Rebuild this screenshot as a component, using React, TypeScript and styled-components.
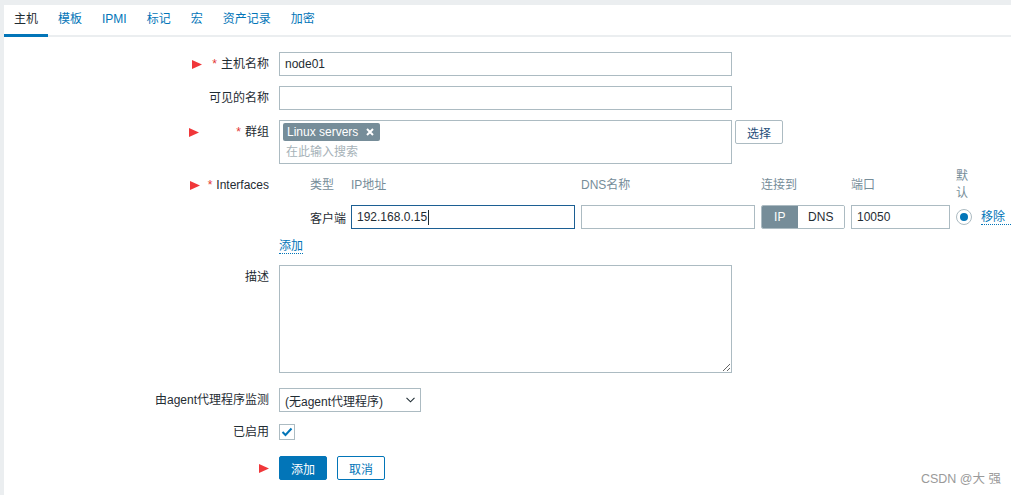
import React from "react";
import styled, { createGlobalStyle } from "styled-components";

const Global = createGlobalStyle`
  html, body { margin: 0; padding: 0; background: #ebeef0; }
  body {
    font-family: "Liberation Sans", Arial, "Noto Sans CJK SC", sans-serif;
    font-size: 12px;
    color: #1f2c33;
  }
  * { box-sizing: border-box; }
`;

const Page = styled.div`
  position: relative;
  margin: 5px 0 0 4px;
  background: #ffffff;
  height: 490px;
  overflow: hidden;
`;

const TabBar = styled.div`
  display: flex;
  box-shadow: inset 0 -2px 0 #ebeef0;
`;

const Tab = styled.div<{ $active?: boolean }>`
  padding: 0 10px;
  line-height: 29px;
  border-bottom: 3px solid ${(p) => (p.$active ? "#0275b8" : "transparent")};
  color: ${(p) => (p.$active ? "#1f2c33" : "#0275b8")};
  white-space: nowrap;
`;

const FormList = styled.div`
  display: flex;
  flex-direction: column;
`;

const Row = styled.div<{ $gap: number }>`
  display: grid;
  grid-template-columns: 265px 1fr;
  column-gap: 10px;
  margin-top: ${(p) => p.$gap}px;
`;

const LabelCell = styled.div<{ $pad?: number }>`
  display: flex;
  align-items: center;
  justify-content: flex-end;
  height: 24px;
  margin-top: ${(p) => p.$pad ?? 0}px;
  line-height: 24px;
  white-space: nowrap;
`;

const Marker = styled.svg<{ $left: number }>`
  margin-left: ${(p) => p.$left}px;
  margin-right: auto;
  flex: none;
`;

const Req = styled.span`
  color: #e33734;
  margin-right: 4px;
`;

const FieldCell = styled.div`
  display: flex;
  align-items: flex-start;
`;

const InputBox = styled.div`
  position: relative;
  display: flex;
`;

const TextInput = styled.input<{ $w: number; $focus?: boolean }>`
  width: ${(p) => p.$w}px;
  height: 24px;
  border: 1px solid ${(p) => (p.$focus ? "#1c5f93" : "#acbbc2")};
  padding: 0 5px;
  font: inherit;
  color: #1f2c33;
  background: #fff;
  outline: none;
  margin: 0;
`;

const Caret = styled.span<{ $left: number }>`
  position: absolute;
  left: ${(p) => p.$left}px;
  top: 5px;
  width: 1px;
  height: 15px;
  background: #1f2c33;
`;

const MultiSelect = styled.div`
  width: 453px;
  height: 44px;
  border: 1px solid #acbbc2;
  padding: 2px 3px;
  display: flex;
  flex-direction: column;
`;

const TagList = styled.div`
  display: flex;
`;

const Tag = styled.span`
  display: inline-flex;
  align-items: center;
  height: 18px;
  padding: 0 6px 0 4px;
  background: #768d99;
  color: #fff;
  border-radius: 2px;
  line-height: 18px;
  gap: 8px;
`;

const TagX = styled.svg`
  flex: none;
`;

const Placeholder = styled.div`
  color: #a6b2b8;
  line-height: 20px;
  padding: 1px 0 0 3px;
`;

const GreyButton = styled.button`
  margin-left: 3px;
  width: 48px;
  height: 24px;
  border: 1px solid #acbbc2;
  border-radius: 2px;
  background: #fff;
  color: #1f4e7a;
  font: inherit;
  padding: 0;
`;

const IfaceGrid = styled.div`
  display: grid;
  grid-template-columns: 25px 35px 224px 174px 84px 99px 19px auto;
  column-gap: 6px;
  row-gap: 2px;
  align-items: center;
`;

const HeadCell = styled.div<{ $narrow?: boolean }>`
  color: #768d99;
  line-height: 17px;
  white-space: ${(p) => (p.$narrow ? "normal" : "nowrap")};
  width: ${(p) => (p.$narrow ? "14px" : "auto")};
  height: 36px;
  display: flex;
  align-items: center;
`;

const TypeText = styled.div`
  white-space: nowrap;
`;

const Toggle = styled.div`
  display: flex;
  height: 24px;
  border: 1px solid #acbbc2;
  border-radius: 2px;
  overflow: hidden;
`;

const ToggleOpt = styled.div<{ $on?: boolean; $w: number }>`
  width: ${(p) => p.$w}px;
  display: flex;
  align-items: center;
  justify-content: center;
  background: ${(p) => (p.$on ? "#768d99" : "#fff")};
  color: ${(p) => (p.$on ? "#fff" : "#1f2c33")};
`;

const Radio = styled.span`
  width: 16px;
  height: 16px;
  border-radius: 50%;
  border: 1px solid #acbbc2;
  display: flex;
  align-items: center;
  justify-content: center;
  &::after {
    content: "";
    width: 8px;
    height: 8px;
    border-radius: 50%;
    background: #0275b8;
  }
`;

const Link = styled.a`
  color: #0275b8;
  text-decoration: none;
  border-bottom: 1px dotted #0275b8;
  line-height: 14px;
  white-space: nowrap;
  cursor: pointer;
`;

const AddWrap = styled.div`
  margin-top: 9px;
  height: 16px;
  display: flex;
  align-items: center;
`;

const TextArea = styled.textarea`
  display: block;
  width: 453px;
  height: 108px;
  border: 1px solid #acbbc2;
  font: inherit;
  margin: 0;
  outline: none;
`;

const Select = styled.div`
  width: 142px;
  height: 24px;
  border: 1px solid #acbbc2;
  display: flex;
  align-items: center;
  justify-content: space-between;
  padding: 0 5px 0 5px;
  white-space: nowrap;
`;

const CheckWrap = styled.div`
  height: 24px;
  display: flex;
  align-items: center;
`;

const Check = styled.span`
  width: 16px;
  height: 16px;
  border: 1px solid #acbbc2;
  display: flex;
  align-items: center;
  justify-content: center;
`;

const Buttons = styled.div`
  display: flex;
  gap: 10px;
`;

const Btn = styled.button<{ $primary?: boolean }>`
  width: 48px;
  height: 24px;
  border-radius: 2px;
  border: 1px solid #0275b8;
  background: ${(p) => (p.$primary ? "#0275b8" : "#fff")};
  color: ${(p) => (p.$primary ? "#fff" : "#0275b8")};
  font: inherit;
  padding: 0;
`;

const Watermark = styled.div`
  position: absolute;
  right: 10px;
  bottom: 8px;
  color: #9a9a9a;
  font-size: 12.5px;
  font-family: "Liberation Sans", "Noto Sans CJK SC", sans-serif;
`;

const Tri = ({ left }: { left: number }) => (
  <Marker $left={left} width="10" height="9" viewBox="0 0 10 9">
    <polygon points="0,0 10,4.5 0,9" fill="#f0373a" />
  </Marker>
);

export default function App() {
  return (
    <>
      <Global />
      <Page>
        <TabBar>
          <Tab $active>主机</Tab>
          <Tab>模板</Tab>
          <Tab>IPMI</Tab>
          <Tab>标记</Tab>
          <Tab>宏</Tab>
          <Tab>资产记录</Tab>
          <Tab>加密</Tab>
        </TabBar>
        <FormList>
          <Row $gap={15}>
            <LabelCell>
              <Tri left={188} />
              <Req>*</Req>主机名称
            </LabelCell>
            <FieldCell>
              <TextInput $w={453} value="node01" readOnly />
            </FieldCell>
          </Row>
          <Row $gap={10}>
            <LabelCell>可见的名称</LabelCell>
            <FieldCell>
              <TextInput $w={453} value="" readOnly />
            </FieldCell>
          </Row>
          <Row $gap={10}>
            <LabelCell>
              <Tri left={185} />
              <Req>*</Req>群组
            </LabelCell>
            <FieldCell>
              <MultiSelect>
                <TagList>
                  <Tag>
                    Linux servers
                    <TagX width="8" height="8" viewBox="0 0 8 8">
                      <path d="M1 1 L7 7 M7 1 L1 7" stroke="#fff" strokeWidth="2" />
                    </TagX>
                  </Tag>
                </TagList>
                <Placeholder>在此输入搜索</Placeholder>
              </MultiSelect>
              <GreyButton>选择</GreyButton>
            </FieldCell>
          </Row>
          <Row $gap={3}>
            <LabelCell $pad={6}>
              <Tri left={186} />
              <Req>*</Req>Interfaces
            </LabelCell>
            <div>
              <IfaceGrid>
                <span />
                <HeadCell>类型</HeadCell>
                <HeadCell>IP地址</HeadCell>
                <HeadCell>DNS名称</HeadCell>
                <HeadCell>连接到</HeadCell>
                <HeadCell>端口</HeadCell>
                <HeadCell $narrow>默认</HeadCell>
                <span />

                <span />
                <TypeText>客户端</TypeText>
                <InputBox>
                  <TextInput $w={224} $focus value="192.168.0.15" readOnly />
                  <Caret $left={77} />
                </InputBox>
                <TextInput $w={174} value="" readOnly />
                <Toggle>
                  <ToggleOpt $on $w={36}>IP</ToggleOpt>
                  <ToggleOpt $w={47}>DNS</ToggleOpt>
                </Toggle>
                <TextInput $w={99} value="10050" readOnly />
                <Radio />
                <Link>移除</Link>
              </IfaceGrid>
              <AddWrap>
                <Link>添加</Link>
              </AddWrap>
            </div>
          </Row>
          <Row $gap={11}>
            <LabelCell>描述</LabelCell>
            <FieldCell>
              <TextArea readOnly />
            </FieldCell>
          </Row>
          <Row $gap={15}>
            <LabelCell>由agent代理程序监测</LabelCell>
            <FieldCell>
              <Select>
                <span>(无agent代理程序)</span>
                <svg width="9" height="6" viewBox="0 0 9 6">
                  <path d="M0.5 0.8 L4.5 4.8 L8.5 0.8" fill="none" stroke="#1f2c33" strokeWidth="1.1" />
                </svg>
              </Select>
            </FieldCell>
          </Row>
          <Row $gap={8}>
            <LabelCell>已启用</LabelCell>
            <FieldCell>
              <CheckWrap>
                <Check>
                  <svg width="12" height="10" viewBox="0 0 12 10">
                    <path d="M1.5 5 L4.5 8 L10.5 1.5" fill="none" stroke="#0275b8" strokeWidth="2" />
                  </svg>
                </Check>
              </CheckWrap>
            </FieldCell>
          </Row>
          <Row $gap={12}>
            <LabelCell>
              <Tri left={256} />
            </LabelCell>
            <Buttons>
              <Btn $primary>添加</Btn>
              <Btn>取消</Btn>
            </Buttons>
          </Row>
        </FormList>
        <Watermark>CSDN @大 强</Watermark>
      </Page>
    </>
  );
}
